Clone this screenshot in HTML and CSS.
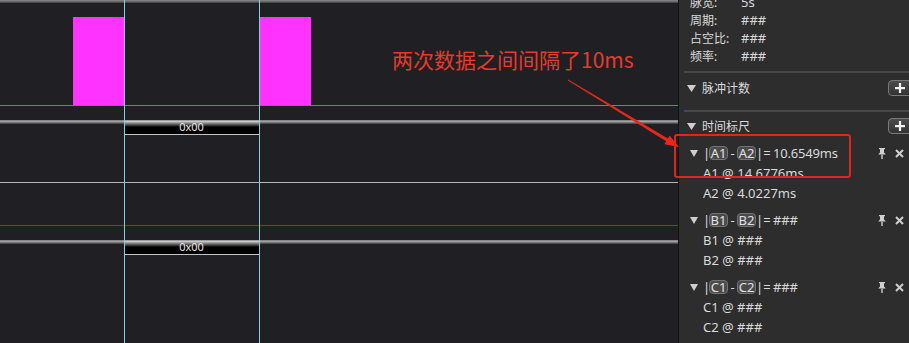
FILE: index.html
```html
<!DOCTYPE html>
<html lang="zh">
<head>
<meta charset="utf-8">
<title>逻辑分析仪</title>
<link rel="stylesheet" href="styles.css">
</head>
<body>
<div class="app">
  <div class="wave">
    <div class="bus-bar"></div>
    <div class="ch-digital">
      <div class="pulse pulse-a"></div>
      <div class="pulse pulse-b"></div>
    </div>
    <div class="ch-base magenta"></div>
    <div class="gap g14"></div>
    <div class="bus">
      <div class="bus-seg">0x00</div>
    </div>
    <div class="gap g47"></div>
    <div class="line gray"></div>
    <div class="gap g42"></div>
    <div class="line blue"></div>
    <div class="gap g14"></div>
    <div class="bus">
      <div class="bus-seg">0x00</div>
    </div>
    <div class="cursor cursor-1"></div>
    <div class="cursor cursor-2"></div>
  </div>

  <div class="panel">
    <div class="props">
      <div class="prop"><span class="k">脉宽:</span><span class="v">5s</span></div>
      <div class="prop"><span class="k">周期:</span><span class="v">###</span></div>
      <div class="prop"><span class="k">占空比:</span><span class="v">###</span></div>
      <div class="prop"><span class="k">频率:</span><span class="v">###</span></div>
    </div>
    <div class="sep"></div>
    <div class="section-head first">
      <svg class="tri" width="9" height="7" viewBox="0 0 9 7"><polygon points="0,0 9,0 4.5,7" /></svg>
      <span class="cjk">脉冲计数</span>
      <span class="plus-btn"><svg width="10" height="10" viewBox="0 0 10 10"><rect x="0" y="4" width="10" height="2.2"/><rect x="3.9" y="0" width="2.2" height="10"/></svg></span>
    </div>
    <div class="sep"></div>
    <div class="section-head second">
      <svg class="tri" width="9" height="7" viewBox="0 0 9 7"><polygon points="0,0 9,0 4.5,7" /></svg>
      <span class="cjk">时间标尺</span>
      <span class="plus-btn"><svg width="10" height="10" viewBox="0 0 10 10"><rect x="0" y="4" width="10" height="2.2"/><rect x="3.9" y="0" width="2.2" height="10"/></svg></span>
    </div>

    <div class="group">
      <div class="mrow">
        <svg class="tri sm" width="8" height="7" viewBox="0 0 8 7"><polygon points="0,0 8,0 4,7" /></svg>
        <span class="bar">|</span><span class="badge">A1</span><span class="dash">-</span><span class="badge">A2</span><span class="bar">|</span><span class="eq">=</span><span class="val">10.6549ms</span>
        <span class="acts">
          <svg class="pin" width="8" height="11" viewBox="0 0 8 11"><path d="M1 0 H7 V1.2 H6 V4.5 L7.8 6.6 H0.2 L2 4.5 V1.2 H1 Z"/><rect x="3.3" y="6.6" width="1.4" height="4.4"/></svg>
          <svg class="x" width="9" height="9" viewBox="0 0 9 9"><path d="M1 1 L8 8 M8 1 L1 8"/></svg>
        </span>
      </div>
      <div class="sub">A1 @ 14.6776ms</div>
      <div class="sub">A2 @ 4.0227ms</div>
    </div>

    <div class="group">
      <div class="mrow">
        <svg class="tri sm" width="8" height="7" viewBox="0 0 8 7"><polygon points="0,0 8,0 4,7" /></svg>
        <span class="bar">|</span><span class="badge">B1</span><span class="dash">-</span><span class="badge">B2</span><span class="bar">|</span><span class="eq">=</span><span class="val">###</span>
        <span class="acts">
          <svg class="pin" width="8" height="11" viewBox="0 0 8 11"><path d="M1 0 H7 V1.2 H6 V4.5 L7.8 6.6 H0.2 L2 4.5 V1.2 H1 Z"/><rect x="3.3" y="6.6" width="1.4" height="4.4"/></svg>
          <svg class="x" width="9" height="9" viewBox="0 0 9 9"><path d="M1 1 L8 8 M8 1 L1 8"/></svg>
        </span>
      </div>
      <div class="sub">B1 @ ###</div>
      <div class="sub">B2 @ ###</div>
    </div>

    <div class="group">
      <div class="mrow">
        <svg class="tri sm" width="8" height="7" viewBox="0 0 8 7"><polygon points="0,0 8,0 4,7" /></svg>
        <span class="bar">|</span><span class="badge">C1</span><span class="dash">-</span><span class="badge">C2</span><span class="bar">|</span><span class="eq">=</span><span class="val">###</span>
        <span class="acts">
          <svg class="pin" width="8" height="11" viewBox="0 0 8 11"><path d="M1 0 H7 V1.2 H6 V4.5 L7.8 6.6 H0.2 L2 4.5 V1.2 H1 Z"/><rect x="3.3" y="6.6" width="1.4" height="4.4"/></svg>
          <svg class="x" width="9" height="9" viewBox="0 0 9 9"><path d="M1 1 L8 8 M8 1 L1 8"/></svg>
        </span>
      </div>
      <div class="sub">C1 @ ###</div>
      <div class="sub">C2 @ ###</div>
    </div>
  </div>
</div>

<div class="note-text">两次数据之间间隔了10ms</div>
<svg class="note-arrow" width="909" height="343" viewBox="0 0 909 343">
  <polygon points="568.2,79.6 667.9,138.4 669.6,135.4 679,147 664.4,144.2 666.1,141.2 567.8,80.4" />
</svg>
<div class="note-box"></div>
</body>
</html>
```

FILE: styles.css
```css
html, body {
  margin: 0;
  padding: 0;
  width: 909px;
  height: 343px;
  overflow: hidden;
  background: #202024;
}

.app {
  display: flex;
  width: 909px;
  height: 343px;
}

/* ---------- waveform canvas ---------- */
.wave {
  position: relative;
  width: 678px;
  flex: 0 0 678px;
  height: 343px;
  background: #202024;
  overflow: hidden;
}

.bus-bar {
  height: 3px;
  background: linear-gradient(#8a8a8a, #6a6a6a 50%, #3a3a3a);
}

.ch-digital {
  height: 102px;
  display: flex;
  align-items: flex-end;
}

.pulse {
  height: 88px;
  background: #ff33ff;
}
.pulse-a { margin-left: 73px; width: 51px; }
.pulse-b { margin-left: 135px; width: 52px; }

.ch-base { height: 1px; }
.ch-base.magenta { background: #cc40d8; }

.gap.g14 { height: 14px; }
.gap.g47 { height: 47px; }
.gap.g42 { height: 42px; }

.line { height: 1px; }
.line.gray { background: #b4b4b4; }
.line.blue { background: #3546c8; }

.bus {
  height: 15px;
  background: linear-gradient(#6e6e6e, #adadad 30%, #7a7a7a 60%, #3a3a3a) 0 0 / 100% 4px no-repeat;
}

.bus-seg {
  margin-left: 124px;
  width: 135px;
  height: 14px;
  border-bottom: 1px solid #c4c4c4;
  background: linear-gradient(#8c8c8c 0, #c6c6c6 1.5px, #6a6a6a 4px, #000 7px, #000);
  color: #e6e6e6;
  font: 11px/13px "Noto Sans", "DejaVu Sans", sans-serif;
  text-align: center;
}

.cursor {
  position: absolute;
  top: 0;
  bottom: 0;
  width: 1px;
  background: #8ccbe6;
}
.cursor-1 { left: 124px; }
.cursor-2 { left: 259px; }

/* ---------- side panel ---------- */
.panel {
  flex: 1;
  background: #2d2d2d;
  border-left: 1px solid #121214;
  overflow: hidden;
  color: #dadada;
  font: 13px "Noto Sans", "Noto Sans CJK SC", sans-serif;
}

.cjk, .prop .k { font-size: 12px; }

.props {
  margin-top: -7px;
  padding-left: 11px;
  margin-bottom: 6px;
}

.prop {
  display: flex;
  align-items: center;
  height: 18px;
}
.prop .k { width: 51px; }

.sep {
  height: 2px;
  margin-left: 5px;
  background: #484848;
}

.section-head {
  display: flex;
  align-items: center;
  height: 16px;
  padding-left: 8px;
}
.section-head.first { padding-top: 7px; padding-bottom: 14px; }
.section-head.second { padding-top: 6px; padding-bottom: 9px; }

.tri { fill: #cfcfcf; margin-right: 6px; flex: none; }

.plus-btn {
  margin-left: auto;
  margin-right: -5px;
  width: 26px;
  height: 16px;
  box-sizing: border-box;
  border: 1px solid #7a7a7a;
  border-radius: 4px;
  background: linear-gradient(#4c4c4c, #333333);
  display: flex;
  align-items: center;
  padding-left: 6px;
}
.plus-btn svg { fill: #f2f2f2; }

.group + .group { margin-top: 7px; }

.mrow {
  display: flex;
  align-items: center;
  height: 20px;
  padding-left: 11px;
  padding-right: 5px;
}

.tri.sm { margin-right: 5px; }

.bar, .dash, .eq {
  display: inline-block;
  text-align: center;
}
.bar { width: 6px; }
.dash { width: 9px; }
.eq { width: 10px; }

.badge {
  box-sizing: border-box;
  width: 19px;
  height: 14px;
  line-height: 12px;
  text-align: center;
  border: 1px solid #747474;
  border-radius: 4px;
  background: #4a4a4a;
  color: #e2e2e2;
}

.val { margin-left: 1px; letter-spacing: -0.2px; }

.acts {
  margin-left: auto;
  display: flex;
  align-items: center;
  gap: 9px;
}
.pin { fill: #cfcfcf; }
.x { stroke: #cfcfcf; stroke-width: 2; fill: none; }

.sub {
  height: 20px;
  line-height: 20px;
  padding-left: 24px;
}

/* ---------- annotation overlay ---------- */
.note-text {
  position: absolute;
  left: 392px;
  top: 46px;
  font: 21px/26px "Noto Sans CJK SC", "Noto Sans", sans-serif;
  color: #e63a2c;
  white-space: nowrap;
}

.note-arrow {
  position: absolute;
  left: 0;
  top: 0;
  pointer-events: none;
}
.note-arrow polygon { fill: #e3281e; }

.note-box {
  position: absolute;
  left: 674px;
  top: 134px;
  width: 177px;
  height: 44px;
  box-sizing: border-box;
  border: 2.5px solid #e0261c;
  border-radius: 3px;
}
```
